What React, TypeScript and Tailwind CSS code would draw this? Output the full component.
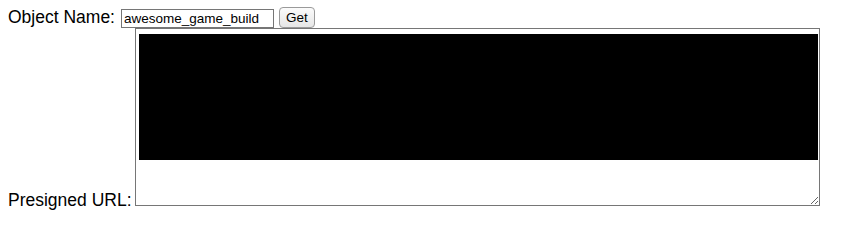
export default function App() {
  return (
    <div className="min-h-screen bg-white pl-2 pt-[7px] font-['Liberation_Sans',Arial,sans-serif] text-[17.5px] text-black">
      {/* Object name row */}
      <div className="flex h-[21px] items-start">
        <label className="mt-[1px] leading-[18px]">Object Name:</label>
        <input
          type="text"
          defaultValue="awesome_game_build"
          className="ml-[6px] mt-[2px] h-[19px] w-[153px] border border-[#767676] px-[2px] text-[13.5px] leading-[16px] outline-none"
        />
        <button className="ml-[5px] h-[21px] w-[36px] rounded-[4px] border border-[#9a9a9a] bg-gradient-to-b from-[#fbfbfb] to-[#e6e6e6] text-[13.5px] leading-[18px]">
          Get
        </button>
      </div>

      {/* Presigned URL row */}
      <div className="flex items-end">
        <label className="-mb-[3px] leading-[18px]">Presigned URL:</label>
        <div className="relative ml-[3px]">
          <textarea className="block h-[178px] w-[685px] border border-[#767676] bg-white outline-none" readOnly />
          {/* redacted content */}
          <div className="absolute left-[4px] top-[6px] h-[126px] w-[679px] bg-black" />
        </div>
      </div>
    </div>
  )
}
